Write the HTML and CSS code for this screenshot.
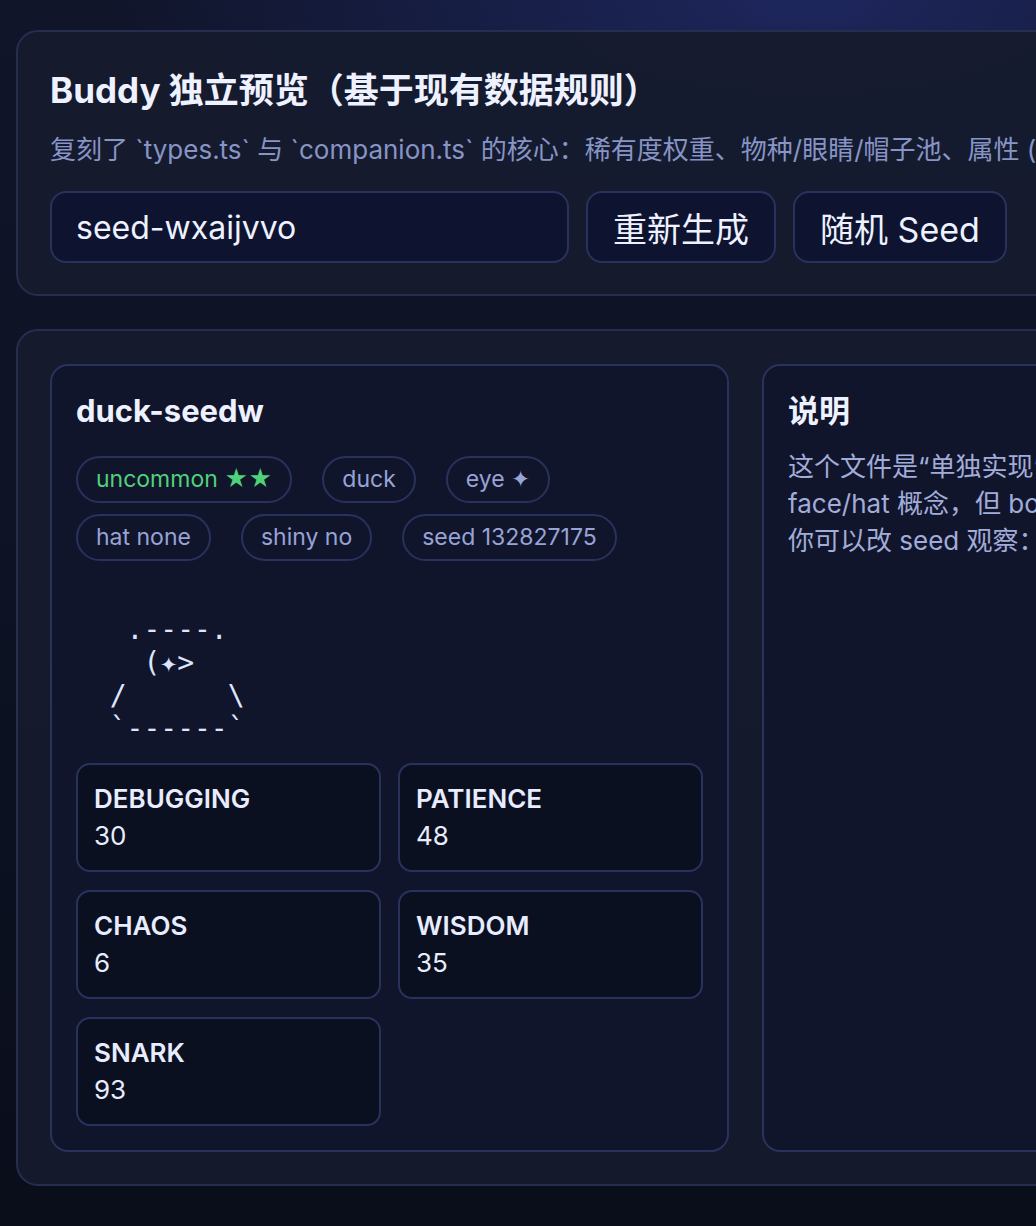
FILE: index.html
```html
<!DOCTYPE html>
<html lang="zh-CN">
<head>
  <meta charset="UTF-8"/>
  <meta name="viewport" content="width=device-width, initial-scale=1"/>
  <title>Buddy 独立预览</title>
  <link rel="stylesheet" href="styles.css">
</head>
<body>
  <div class="page">

    <!-- Header / controls -->
    <section class="panel header">
      <h1>Buddy 独立预览（基于现有数据规则）</h1>
      <p class="sub">复刻了 `types.ts` 与 `companion.ts` 的核心：稀有度权重、物种/眼睛/帽子池、属性 (stats) 生成与 shiny 判定。</p>
      <div class="controls">
        <input type="text" id="seed-input" class="seed-input" value="seed-wxaijvvo"/>
        <button class="btn" id="regen-btn">重新生成</button>
        <button class="btn" id="random-btn">随机 Seed</button>
      </div>
    </section>

    <!-- Result -->
    <section class="panel result">
      <div class="card">
        <h2>duck-seedw</h2>
        <div class="tags">
          <span class="tag tag-rarity">uncommon ★★</span>
          <span class="tag">duck</span>
          <span class="tag">eye ✦</span>
          <span class="tag">hat none</span>
          <span class="tag">shiny no</span>
          <span class="tag">seed 132827175</span>
        </div>
<pre class="sprite">   .----.
    (✦>
  /      \
  `------`</pre>
        <div class="stats">
          <div class="stat"><div class="stat-name">DEBUGGING</div><div class="stat-value">30</div></div>
          <div class="stat"><div class="stat-name">PATIENCE</div><div class="stat-value">48</div></div>
          <div class="stat"><div class="stat-name">CHAOS</div><div class="stat-value">6</div></div>
          <div class="stat"><div class="stat-name">WISDOM</div><div class="stat-value">35</div></div>
          <div class="stat"><div class="stat-name">SNARK</div><div class="stat-value">93</div></div>
        </div>
      </div>

      <div class="card">
        <h2>说明</h2>
        <p class="note">这个文件是“单独实现”的 buddy 预览，保留了 eye、<span class="nowrap">face/hat</span> 概念，但 body 用简化的 ASCII 绘制。</p>
        <p class="note">你可以改 seed 观察：同一 seed 结果固定。</p>
      </div>
    </section>

  </div>
</body>
</html>
```

FILE: styles.css
```css
html, body{
  overflow: hidden;
}
body{
  font-family: "Inter", "Noto Sans CJK SC", sans-serif;
  background:
    radial-gradient(ellipse 700px 260px at 78% 0%, rgba(34, 44, 110, 0.75), transparent 100%),
    linear-gradient(180deg, #10152a 0%, #0c1122 60%, #0a0e1b 100%);
  color: #e6eaff;
  margin: 0;
  padding: 30px 16px;
  min-height: 100vh;
  box-sizing: border-box;
}
.page{
  width: 1459px;
  display: flex;
  flex-direction: column;
  gap: 33px;
}
.panel{
  background: rgba(22, 27, 46, 0.92);
  border: 2px solid #262e50;
  border-radius: 22px;
  padding: 32px;
}
.header{
  padding-top: 37px;
  padding-bottom: 31px;
}
h1{
  font-size: 35px;
  line-height: 42px;
  font-weight: 700;
  margin: 0 0 21px;
  color: #eef1ff;
}
.sub{
  font-size: 26px;
  line-height: 36px;
  margin: 0 0 23px;
  color: #8794c6;
  white-space: nowrap;
}
.controls{
  display: flex;
  gap: 17px;
  height: 72px;
}
.seed-input{
  width: 519px;
  box-sizing: border-box;
  background: #0e1430;
  border: 2px solid #29325c;
  border-radius: 16px;
  padding: 0 24px;
  font-family: inherit;
  font-size: 32px;
  color: #eef1ff;
  outline: none;
}
.btn{
  background: #0e1430;
  border: 2px solid #29325c;
  border-radius: 16px;
  padding: 0 25px;
  font-family: inherit;
  font-size: 34px;
  color: #eef1ff;
  cursor: pointer;
}
.result{
  display: grid;
  grid-template-columns: 1fr 1fr;
  gap: 33px;
  padding: 33px 32px 32px;
}
.card{
  background: #10152b;
  border: 2px solid #29325c;
  border-radius: 18px;
  padding: 27px 24px 24px;
}
h2{
  font-size: 31px;
  line-height: 36px;
  font-weight: 700;
  margin: 0 0 27px;
  color: #eef1ff;
}
.tags{
  display: flex;
  flex-wrap: wrap;
  gap: 11px 30px;
}
.tag{
  font-size: 23px;
  line-height: 31px;
  padding: 6px 18px;
  border: 2px solid #29325c;
  border-radius: 999px;
  color: #98a3d6;
}
.tag-rarity{
  color: #4fd27a;
}
.sprite{
  font-family: "DejaVu Sans Mono", monospace;
  font-size: 28px;
  line-height: 33px;
  color: #dfe5ff;
  margin: 52px 0 18px;
}
.stats{
  display: grid;
  grid-template-columns: 1fr 1fr;
  gap: 18px 17px;
}
.stat{
  background: #0b1020;
  border: 2px solid #29325c;
  border-radius: 14px;
  padding: 15px 16px 16px;
  font-size: 26px;
  line-height: 37px;
}
.stat-name{
  font-weight: 600;
  color: #e8ecff;
}
.stat-value{
  color: #e8ecff;
}
.card h2 + .note{
  margin-top: -8px;
}
.note{
  font-size: 26px;
  line-height: 37px;
  color: #a2acd9;
  margin: 0;
}
.nowrap{
  white-space: nowrap;
}
```
